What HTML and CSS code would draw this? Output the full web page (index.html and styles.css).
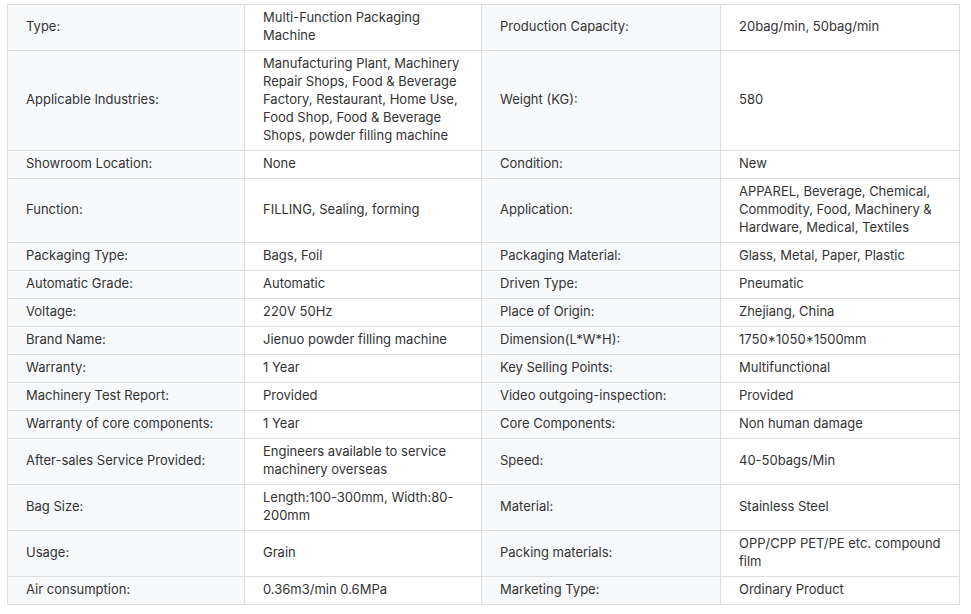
FILE: index.html
```html
<!DOCTYPE html>
<html>
<head>
<meta charset="utf-8">
<link rel="stylesheet" href="styles.css">
</head>
<body>
<table class="spec">
<colgroup><col class="c1"><col class="c2"><col class="c3"><col class="c4"></colgroup>
<tbody>
<tr><td class="k">Type:</td><td class="v">Multi-Function Packaging Machine</td><td class="k">Production Capacity:</td><td class="v">20bag/min, 50bag/min</td></tr>
<tr><td class="k">Applicable Industries:</td><td class="v">Manufacturing Plant, Machinery Repair Shops, Food &amp; Beverage Factory, Restaurant, Home Use, Food Shop, Food &amp; Beverage Shops, powder filling machine</td><td class="k">Weight (KG):</td><td class="v">580</td></tr>
<tr><td class="k">Showroom Location:</td><td class="v">None</td><td class="k">Condition:</td><td class="v">New</td></tr>
<tr><td class="k">Function:</td><td class="v">FILLING, Sealing, forming</td><td class="k">Application:</td><td class="v">APPAREL, Beverage, Chemical, Commodity, Food, Machinery &amp; Hardware, Medical, Textiles</td></tr>
<tr><td class="k">Packaging Type:</td><td class="v">Bags, Foil</td><td class="k">Packaging Material:</td><td class="v">Glass, Metal, Paper, Plastic</td></tr>
<tr><td class="k">Automatic Grade:</td><td class="v">Automatic</td><td class="k">Driven Type:</td><td class="v">Pneumatic</td></tr>
<tr><td class="k">Voltage:</td><td class="v">220V 50Hz</td><td class="k">Place of Origin:</td><td class="v">Zhejiang, China</td></tr>
<tr><td class="k">Brand Name:</td><td class="v">Jienuo powder filling machine</td><td class="k">Dimension(L*W*H):</td><td class="v">1750*1050*1500mm</td></tr>
<tr><td class="k">Warranty:</td><td class="v">1 Year</td><td class="k">Key Selling Points:</td><td class="v">Multifunctional</td></tr>
<tr><td class="k">Machinery Test Report:</td><td class="v">Provided</td><td class="k">Video outgoing-inspection:</td><td class="v">Provided</td></tr>
<tr><td class="k">Warranty of core components:</td><td class="v">1 Year</td><td class="k">Core Components:</td><td class="v">Non human damage</td></tr>
<tr><td class="k">After-sales Service Provided:</td><td class="v">Engineers available to service machinery overseas</td><td class="k">Speed:</td><td class="v">40-50bags/Min</td></tr>
<tr><td class="k">Bag Size:</td><td class="v">Length:100-300mm, Width:80-200mm</td><td class="k">Material:</td><td class="v">Stainless Steel</td></tr>
<tr><td class="k">Usage:</td><td class="v">Grain</td><td class="k">Packing materials:</td><td class="v">OPP/CPP PET/PE etc. compound film</td></tr>
<tr><td class="k">Air consumption:</td><td class="v">0.36m3/min 0.6MPa</td><td class="k">Marketing Type:</td><td class="v">Ordinary Product</td></tr>
</tbody>
</table>
</body>
</html>
```
FILE: styles.css
```css
html, body {
  margin: 0;
  padding: 0;
  background: #ffffff;
}
body {
  padding: 4px 0 0 7px;
  font-family: Inter, "Noto Sans", sans-serif;
  font-size: 13px;
  color: #333333;
}
.spec {
  border-collapse: collapse;
  table-layout: fixed;
  width: 952px;
}
.c1 { width: 237px; }
.c2 { width: 237px; }
.c3 { width: 239px; }
.c4 { width: 239px; }
.spec td {
  border: 1px solid #dddddd;
  padding: 3px 18px 6px 18px;
  line-height: 18px;
  vertical-align: middle;
  word-wrap: break-word;
}
.spec td.k {
  background: #f8f9fb;
}
.spec td.v {
  background: #ffffff;
}
```
